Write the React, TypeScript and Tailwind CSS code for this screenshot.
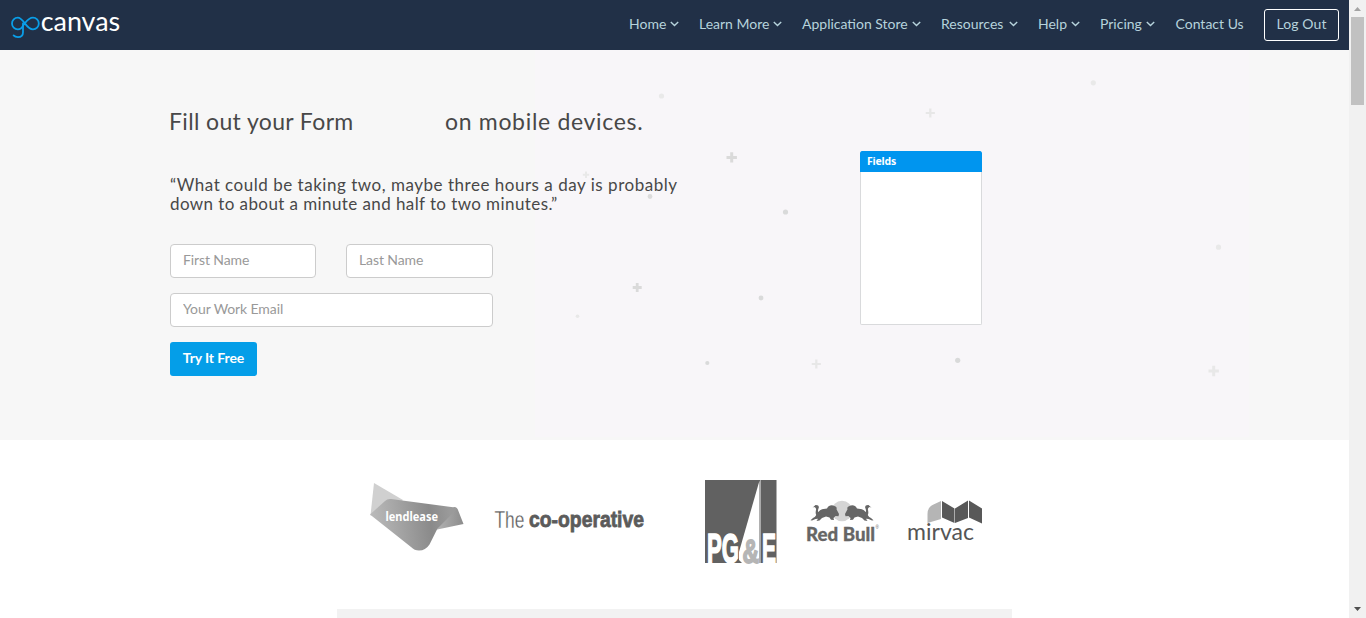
import React from "react";

const navItems = [
  { label: "Home", width: "w-[50px]" },
  { label: "Learn More", width: "w-[83px]" },
  { label: "Application Store", width: "w-[119px]" },
  { label: "Resources", width: "w-[77px]" },
  { label: "Help", width: "w-[42px]" },
  { label: "Pricing", width: "w-[55px]" },
];

const dots = [
  { x: 101.5, y: 46, r: 2.6, c: "#e9e9e9" },
  { x: 90, y: 146.5, r: 2.4, c: "#dcdcdc" },
  { x: 225.5, y: 162, r: 2.6, c: "#d9dada" },
  { x: 201, y: 248, r: 2.4, c: "#d9dada" },
  { x: 17.5, y: 266.3, r: 1.8, c: "#e8e8e8" },
  { x: 147.3, y: 313, r: 2.1, c: "#d9dada" },
  { x: 397.7, y: 310.3, r: 2.6, c: "#d9dada" },
  { x: 533.3, y: 32.8, r: 2.6, c: "#e9e9e9" },
  { x: 658.5, y: 197.2, r: 2.6, c: "#e9e9e9" },
];

const pluses = [
  { x: 26, y: 124.7, s: 3.2, w: 2, c: "#e9e9e9" },
  { x: 171.7, y: 107.4, s: 5.2, w: 3, c: "#dadada" },
  { x: 77.2, y: 237.5, s: 4.5, w: 2.8, c: "#dadada" },
  { x: 370.3, y: 63, s: 4.6, w: 2.2, c: "#e7e7e7" },
  { x: 256.3, y: 314, s: 4.6, w: 2.2, c: "#e7e7e7" },
  { x: 653.7, y: 321, s: 5.2, w: 3, c: "#e8e8e8" },
];

const bull =
  "M815.500 505c2.500-.2 3.800 1.200 3.200 3-.6 1.500-1.200 3-.3 4 2-2.500 5-3.200 8.600-3.400 1.500-3.600 5-4 7.500-2.600 2 .5 2.500 2 2 3.300l2.500 4.700-.5 2.300-3-.3-2 2 .5 2-3-.2-1.500-2.300-3.500-1-4 1.500-2.500 2.500-3 .5 1.500-2.300-2.500.3-3.500 1.500-1.500-.3 2.500-2.200c1.200-.5 2.500-1.500 3.200-3-.9-1.800-.5-3.500-.1-5.500 0-1.500-1-2.300-2.100-2.500l-1.500.8Z";

function Chevron() {
  return (
    <svg className="h-[6px] w-[9px] shrink-0" viewBox="0 0 9 6" fill="none" stroke="#b6d3dc" strokeWidth="1.4">
      <path d="M0.8 0.9 4.5 4.6 8.2 0.9" />
    </svg>
  );
}

function Logo() {
  return (
    <svg className="h-[42px] w-[124px]" viewBox="0 0 124 42">
      <g fill="none" stroke="#0a9ee8" strokeWidth="1.8" strokeLinecap="round">
        <path d="M23 23.500v8.800c0 3.400-2.100 4.900-5 4.900-1.900 0-3.400-.6-4.400-1.800" />
        <path d="M23 25.600C21.900 28 20 29.300 17.800 29.300a5.800 5.800 0 0 1 0-11.600c5.700 0 8.300 11.600 15.200 11.600a5.800 5.800 0 0 0 0-11.600c-5 0-6.900 4.500-10 7.900Z" />
      </g>
      <text x="40.700" y="30.800" fill="#fff" fontFamily="Lato, sans-serif" fontSize="26.500" textLength="79.500" lengthAdjust="spacingAndGlyphs">canvas</text>
    </svg>
  );
}

function Header() {
  return (
    <header className="flex h-[50px] items-start justify-between bg-[#213047] pr-[10px]">
      <Logo />
      <nav className="flex h-[50px] items-start gap-5 text-[14px] leading-5 text-[#b6d3dc]">
        {navItems.map((n) => (
          <a key={n.label} className={`mt-[14px] flex items-center justify-between whitespace-nowrap ${n.width}`}>
            {n.label}
            <Chevron />
          </a>
        ))}
        <a className="mt-[14px] w-[69px] pl-[0.5px] whitespace-nowrap">Contact Us</a>
        <a className="mt-[9px] flex h-8 w-[75px] items-center justify-center rounded-[3px] border border-white pb-[2px] tracking-[0.1px] whitespace-nowrap">Log Out</a>
      </nav>
    </header>
  );
}

function Field({ placeholder }: { placeholder: string }) {
  return (
    <input
      placeholder={placeholder}
      className="h-[34px] w-full rounded border border-[#ccc] bg-white px-[12px] pb-[3px] text-[14px] tracking-[-0.1px] outline-none placeholder:text-[#999]"
    />
  );
}

function Hero() {
  return (
    <section className="relative h-[390px] bg-[#f7f7f7]">
      <svg className="absolute top-0 left-[560px] h-[390px] w-[689px] overflow-visible" viewBox="0 0 689 390">
        <rect x="-25" y="0" width="714" height="387" fill="#f8f6f9" />
        {dots.map((d, i) => (
          <circle key={i} cx={d.x} cy={d.y} r={d.r} fill={d.c} />
        ))}
        {pluses.map((p, i) => (
          <path key={i} d={`M${p.x - p.s} ${p.y}h${p.s * 2}M${p.x} ${p.y - p.s}v${p.s * 2}`} stroke={p.c} strokeWidth={p.w} />
        ))}
      </svg>
      <div className="relative flex pl-[170px]">
        <div className="w-[690px] pt-[56px] text-[#484848]">
          <h1 className="flex h-[30px] text-[23px] leading-[30px] whitespace-nowrap">
            <span className="-ml-px w-[276px] tracking-[0.36px]">Fill out your Form</span>
            <span className="tracking-[0.68px]">on mobile devices.</span>
          </h1>
          <p className="mt-[39px] text-[17px] leading-[19px] whitespace-nowrap">
            <span className="tracking-[0.52px]">“What could be taking two, maybe three hours a day is probably</span>
            <br />
            <span className="tracking-[0.41px]">down to about a minute and half to two minutes.”</span>
          </p>
          <form className="mt-[31px] flex w-[323px] flex-col items-start gap-[15px]">
            <div className="grid w-full grid-cols-[146px_147px] gap-[30px]">
              <Field placeholder="First Name" />
              <Field placeholder="Last Name" />
            </div>
            <Field placeholder="Your Work Email" />
            <button type="button" className="h-[34px] w-[87px] rounded-[3px] bg-[#049ee8] pb-[3px] text-[14px] font-bold tracking-[-0.1px] whitespace-nowrap text-white">
              Try It Free
            </button>
          </form>
        </div>
        <div className="mt-[101px] h-[174px] w-[122px] rounded-[2px] border border-[#d9dadc] border-t-[#0095ef] bg-white">
          <div className="-mx-px h-5 rounded-t-[1px] bg-[#0095ef] pl-[7px] font-['Noto_Sans'] text-[10.5px] leading-[19px] font-bold tracking-[-0.2px] text-white">Fields</div>
        </div>
      </div>
    </section>
  );
}

function Logos() {
  return (
    <section className="h-[169px] bg-white">
      <svg className="ml-[360px] h-[169px] w-[640px]" viewBox="360 440 640 169">
        <defs>
          <linearGradient id="lend" gradientUnits="userSpaceOnUse" x1="370" x2="450" y1="525" y2="515">
            <stop offset="0" stopColor="#bcbcbc" />
            <stop offset="0.75" stopColor="#8a8a8a" />
            <stop offset="1" stopColor="#9a9a9a" />
          </linearGradient>
          <linearGradient id="fold" x1="0" x2="1" y1="0" y2="0">
            <stop offset="0" stopColor="#b8b8b8" />
            <stop offset="1" stopColor="#8c8c8c" />
          </linearGradient>
        </defs>
        <path d="M374 483 403 500 390 512 370.500 515.500Z" fill="#d0d0d0" />
        <path d="M454 507q3 0 4 3l5.500 14-31 6.500Z" fill="url(#fold)" />
        <path d="M370 514.500 385 501q2.500-2.500 6-2l64 8.500q2.500.5.500 3l-18 18-8 16q-4 6-10.500 6-4.500 0-8-3.500Z" fill="url(#lend)" />
        <text x="385.500" y="520.500" fill="#fff" fontFamily="Noto Sans, sans-serif" fontWeight="700" fontSize="12.500" textLength="52.500" lengthAdjust="spacingAndGlyphs">lendlease</text>

        <g fill="#5b5b5b" fontFamily="Liberation Sans, Arial, sans-serif">
          <text transform="translate(494.500 527.500) scale(.68 1)" fontSize="24" textLength="44" lengthAdjust="spacingAndGlyphs" stroke="#fff" strokeWidth="0.3">The</text>
          <text x="529" y="527" fontSize="22.500" fontWeight="700" textLength="115" lengthAdjust="spacingAndGlyphs" stroke="#5b5b5b" strokeWidth="0.8">co-operative</text>
        </g>

        <rect x="705" y="480" width="71.500" height="83" fill="#616161" />
        <path d="M759.500 480.500V563H742l-3-3V552Z" fill="#fff" />
        <path d="M760.500 480v83" stroke="#aaa" strokeWidth="1" />
        <g fontFamily="Liberation Sans, Arial, sans-serif" fontWeight="700">
          <text transform="translate(707 562.500) scale(1 1.400)" fill="#fff" stroke="#fff" strokeWidth="1.200" fontSize="31" textLength="32" lengthAdjust="spacingAndGlyphs">PG</text>
          <text transform="translate(742.500 562.500)" fill="#b5b5b5" stroke="#b5b5b5" strokeWidth="1.800" fontSize="33" textLength="16.500" lengthAdjust="spacingAndGlyphs">&amp;</text>
          <text transform="translate(762 562.500) scale(1 1.400)" fill="#fff" stroke="#fff" strokeWidth="1.200" fontSize="31" textLength="14" lengthAdjust="spacingAndGlyphs">E</text>
        </g>

        <circle cx="842" cy="511" r="10.300" fill="#d5d5d5" />
        <g fill="#666">
          <path d={bull} />
          <path transform="translate(1684 0) scale(-1 1)" d={bull} />
          <text x="806" y="540.500" fontFamily="Lato, sans-serif" fontWeight="900" fontSize="19.500" textLength="69" lengthAdjust="spacingAndGlyphs" stroke="#666" strokeWidth="0.300">Red Bull</text>
          <text x="875.500" y="528.500" fontFamily="Liberation Sans, sans-serif" fontSize="4.500">®</text>
        </g>

        <path d="M941 501v18l-13.500 4v-9q0-7 6-9.500Z" fill="#b5b5b5" />
        <path d="M942 501 954.500 508.500V523L942 517.500ZM955 508.500 968 500.500V518L955 523ZM969 500.500 982 508.500V523.500L969 517.500Z" fill="#585858" />
        <text x="907" y="540" fill="#555" fontFamily="Lato, sans-serif" fontSize="23" textLength="67" lengthAdjust="spacingAndGlyphs">mirvac</text>
      </svg>
    </section>
  );
}

function ScrollBar() {
  return (
    <aside className="flex h-[618px] w-[17px] flex-col items-center justify-between bg-[#f1f1f1]">
      <div className="flex flex-col items-center">
        <svg className="h-[17px] w-[17px]" viewBox="0 0 17 17">
          <path d="M5 11 8.500 7 12 11Z" fill="#a3a3a3" />
        </svg>
        <div className="h-[88px] w-[13px] bg-[#c1c1c1]" />
      </div>
      <svg className="h-[17px] w-[17px]" viewBox="0 0 17 17">
        <path d="M5 6 8.500 10 12 6Z" fill="#505050" />
      </svg>
    </aside>
  );
}

export default function App() {
  return (
    <div className="flex h-[618px] w-[1366px] overflow-hidden bg-white font-['Lato',sans-serif]">
      <main className="w-[1349px]">
        <Header />
        <Hero />
        <Logos />
        <div className="ml-[337px] h-[9px] w-[675px] bg-[#f2f2f2]" />
      </main>
      <ScrollBar />
    </div>
  );
}
